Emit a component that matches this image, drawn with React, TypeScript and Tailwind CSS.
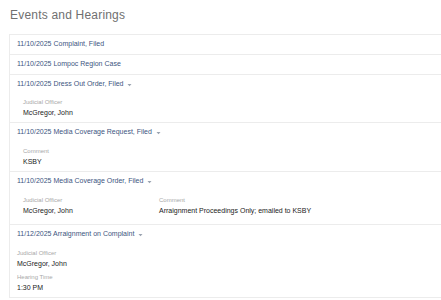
import React from 'react'

const Caret = () => (
  <svg width="5" height="4" viewBox="0 0 5 4" className="ml-[4px] inline-block">
    <path d="M0.5 1 L4.5 1 L2.5 3.2 Z" fill="#9aa3b0" />
  </svg>
)

const Header = ({ text, caret }: { text: string; caret?: boolean }) => (
  <div className="flex h-[19px] items-center px-[7px] text-[7px] text-[#3d5580]">
    <span>{text}</span>
    {caret && <Caret />}
  </div>
)

const Field = ({ label, value, className = '' }: { label: string; value: string; className?: string }) => (
  <div className={className}>
    <div className="text-[6px] leading-[8px] text-[#a8a8a8]">{label}</div>
    <div className="mt-[2px] text-[7px] leading-[9px] text-[#222]">{value}</div>
  </div>
)

const App: React.FC = () => {
  return (
    <div className="h-[300px] w-[441px] overflow-hidden bg-white font-['Liberation_Sans',Arial,sans-serif] antialiased">
      <h1 className="pl-[10px] pt-[6px] text-[12px] leading-[18px] tracking-[0.2px] text-[#707070]">
        Events and Hearings
      </h1>

      <div className="ml-[9px] mt-[10px] w-[460px] border-b border-l border-[#ececec]">
        <div className="border-t border-[#ececec]">
          <Header text="11/10/2025 Complaint, Filed" />
        </div>
        <div className="border-t border-[#ececec]">
          <Header text="11/10/2025 Lompoc Region Case" />
        </div>

        <div className="border-t border-[#ececec]">
          <Header text="11/10/2025 Dress Out Order, Filed" caret />
          <div className="pb-[5px] pl-[13px] pt-[4px]">
            <Field label="Judicial Officer" value="McGregor, John" />
          </div>
        </div>

        <div className="border-t border-[#ececec]">
          <Header text="11/10/2025 Media Coverage Request, Filed" caret />
          <div className="pb-[5px] pl-[13px] pt-[5px]">
            <Field label="Comment" value="KSBY" />
          </div>
        </div>

        <div className="border-t border-[#ececec]">
          <Header text="11/10/2025 Media Coverage Order, Filed" caret />
          <div className="flex pb-[9px] pl-[13px] pt-[5px]">
            <Field label="Judicial Officer" value="McGregor, John" className="w-[136px]" />
            <Field label="Comment" value="Arraignment Proceedings Only; emailed to KSBY" />
          </div>
        </div>

        <div className="border-t border-[#ececec]">
          <Header text="11/12/2025 Arraignment on Complaint" caret />
          <div className="pb-[5px] pl-[7px] pt-[5px]">
            <Field label="Judicial Officer" value="McGregor, John" />
            <Field label="Hearing Time" value="1:30 PM" className="mt-[5px]" />
          </div>
        </div>
      </div>
    </div>
  )
}

export default App
